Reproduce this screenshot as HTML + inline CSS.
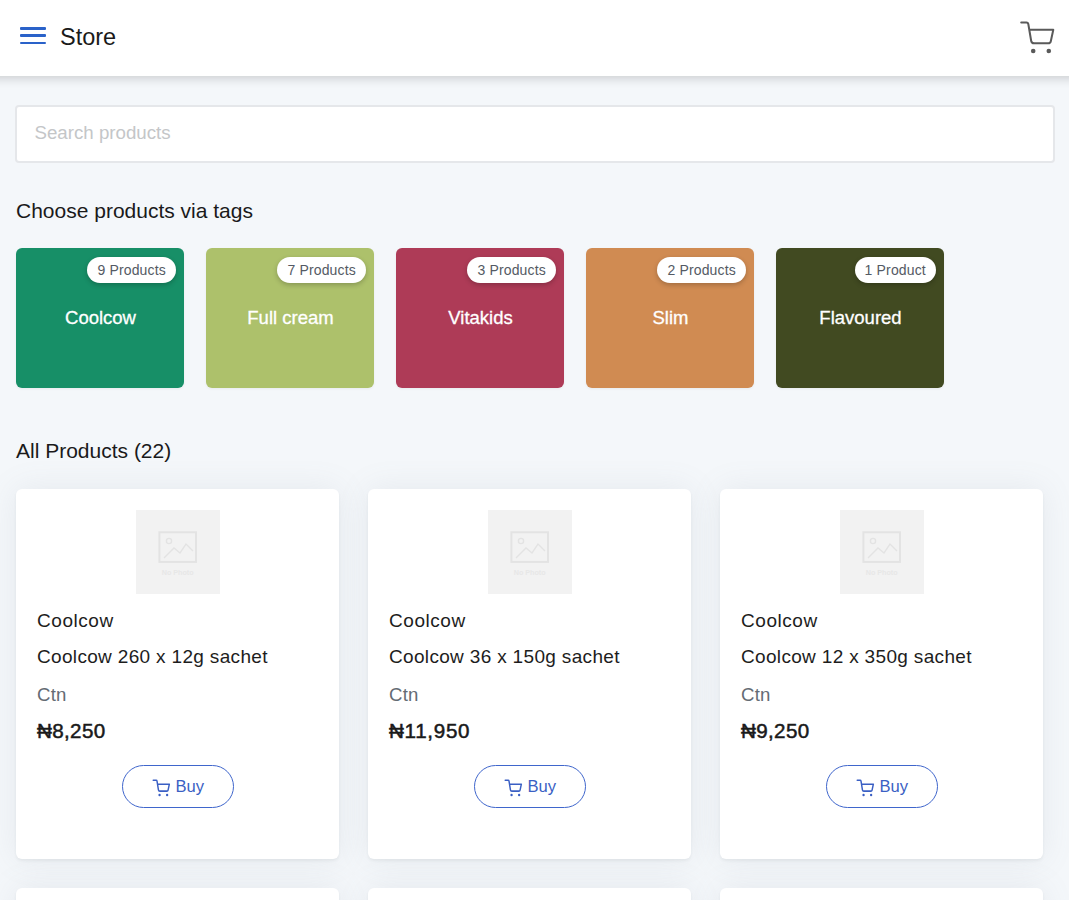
<!DOCTYPE html>
<html lang="en">
<head>
<meta charset="utf-8">
<title>Store</title>
<style>
*{box-sizing:border-box;margin:0;padding:0}
html,body{width:1069px;height:900px;overflow:hidden}
body{background:#f4f7fa;font-family:"Liberation Sans",sans-serif;color:#1d1d1d;position:relative}
.abs{position:absolute}
header{position:absolute;left:0;top:0;width:1069px;height:76px;background:#fff;z-index:5}
header::after{content:'';position:absolute;left:-30px;right:-30px;top:0;bottom:0;box-shadow:0 2px 10px rgba(10,12,15,.19);pointer-events:none}
.burger{position:absolute;left:20px;top:27px;width:26px;height:18px}
.burger i{position:absolute;left:0;width:26px;height:2.6px;background:#2a62c9;border-radius:1px}
.title{position:absolute;left:60px;top:22px;font-size:23.5px;line-height:30px;color:#1a1a1a;white-space:nowrap}
.cart{position:absolute;left:1018px;top:18px;width:40px;height:40px}
.search{position:absolute;left:15px;top:105px;width:1040px;height:58px;background:#fff;border:2px solid #e5e7ea;border-radius:4px}
.search span{position:absolute;left:17.5px;top:14.5px;font-size:18.7px;line-height:22px;color:#c4c6c8;white-space:nowrap}
h2{position:absolute;left:16px;font-weight:400;font-size:21px;line-height:26px;color:#1a1a1a;white-space:nowrap}
.tag{position:absolute;top:248.3px;width:168.4px;height:140.2px;border-radius:6px;color:#fff;box-shadow:0 1px 3px rgba(0,0,0,.05)}
.tag b{position:absolute;right:8.5px;top:9px;height:26px;padding:0 10px;border-radius:13px;background:#fff;color:#545a64;font-weight:400;font-size:14px;letter-spacing:.15px;line-height:26px;white-space:nowrap;box-shadow:0 2px 5px rgba(0,0,0,.22)}
.tag span{position:absolute;left:0;width:169px;top:57.6px;text-align:center;font-size:18.5px;line-height:24px;white-space:nowrap;-webkit-text-stroke:.3px #fff}
.card{position:absolute;width:323.4px;height:370.6px;background:#fff;border-radius:6px;box-shadow:0 2px 3px rgba(40,45,50,.06),0 0 32px rgba(120,132,148,.12)}
.ph{position:absolute;left:120px;top:21.4px;width:84px;height:84px;background:#f2f2f2}
.ph svg{position:absolute;left:0;top:0}
.l1,.l2,.l3,.l4{position:absolute;left:21px;white-space:nowrap;line-height:24px}
.l1{top:120px;font-size:19px;letter-spacing:.55px;color:#1d1d1d}
.l2{top:156.3px;font-size:19px;letter-spacing:.33px;color:#1d1d1d}
.l3{top:194.5px;font-size:18.6px;letter-spacing:.2px;color:#646b74}
.l4{top:230.3px;font-size:20.6px;font-weight:400;letter-spacing:.35px;color:#1a1a1a;-webkit-text-stroke:.5px #1a1a1a}
.buy{position:absolute;left:105.7px;top:276.4px;width:112.4px;height:43.4px;border:1.3px solid #3f66cc;border-radius:22px;background:#fff;color:#3a5fc4;font-size:16.6px;line-height:41.8px}
.buy svg{position:absolute;left:29px;top:11.7px}
.buy span{position:absolute;left:52.8px;top:0;white-space:nowrap}
</style>
</head>
<body>
<header>
  <div class="burger"><i style="top:0"></i><i style="top:7.4px"></i><i style="top:14.8px"></i></div>
  <div class="title">Store</div>
  <svg class="cart" viewBox="0 0 40 40" fill="none" stroke="#5a5a5a" stroke-width="2" stroke-linecap="round" stroke-linejoin="round">
    <path d="M3.2 4.500 H8.5 Q10 4.500 10.300 6 L13.200 23 Q13.600 25.300 16 25.300 H30.300 Q32.400 25.300 32.800 23.300 L35.300 11.800 H11.600"/>
    <circle cx="15.200" cy="33" r="2.300" fill="#5a5a5a" stroke="none"/>
    <circle cx="30.800" cy="33" r="2.300" fill="#5a5a5a" stroke="none"/>
  </svg>
</header>

<div class="search"><span>Search products</span></div>

<h2 style="top:198px">Choose products via tags</h2>

<div class="tag" style="left:16px;background:#178f67"><b>9 Products</b><span>Coolcow</span></div>
<div class="tag" style="left:206px;background:#adc16b"><b>7 Products</b><span>Full cream</span></div>
<div class="tag" style="left:396px;background:#ae3b57"><b>3 Products</b><span>Vitakids</span></div>
<div class="tag" style="left:586px;background:#d08b52"><b>2 Products</b><span>Slim</span></div>
<div class="tag" style="left:776px;background:#414a21"><b>1 Product</b><span>Flavoured</span></div>

<h2 style="top:438px">All Products (22)</h2>

<div class="card" style="left:16px;top:488.7px">
  <div class="ph"><svg width="84" height="84" viewBox="0 0 84 84" fill="none" stroke="#e3e3e3" stroke-width="1.4"><rect x="23.4" y="22.300" width="36.6" height="29.600" stroke-width="2"/><circle cx="33" cy="31" r="2.6"/><path d="M28 48 L38 38 L44 43 L50 34 L57 41"/><text x="41.700" y="65.200" text-anchor="middle" font-family="Liberation Sans, sans-serif" font-size="7.2" font-weight="700" fill="#e7e7e7" stroke="none">No Photo</text></svg></div>
  <div class="l1">Coolcow</div>
  <div class="l2">Coolcow 260 x 12g sachet</div>
  <div class="l3">Ctn</div>
  <div class="l4">₦8,250</div>
  <div class="buy"><svg width="19.5" height="20.6" preserveAspectRatio="none" viewBox="0 0 40 40" fill="none" stroke="#3a5fc4" stroke-width="3" stroke-linecap="round" stroke-linejoin="round"><path d="M2.5 4.500 H8.5 Q10 4.5 10.3 6 L13.2 23 Q13.6 25.5 16 25.5 H30.5 Q32.6 25.5 33 23.5 L35.6 12 H11.6"/><circle cx="15.5" cy="33" r="2.4" fill="#3a5fc4" stroke="none"/><circle cx="31" cy="33" r="2.4" fill="#3a5fc4" stroke="none"/></svg><span>Buy</span></div>
</div>

<div class="card" style="left:368px;top:488.7px">
  <div class="ph"><svg width="84" height="84" viewBox="0 0 84 84" fill="none" stroke="#e3e3e3" stroke-width="1.4"><rect x="23.4" y="22.300" width="36.6" height="29.600" stroke-width="2"/><circle cx="33" cy="31" r="2.6"/><path d="M28 48 L38 38 L44 43 L50 34 L57 41"/><text x="41.700" y="65.200" text-anchor="middle" font-family="Liberation Sans, sans-serif" font-size="7.2" font-weight="700" fill="#e7e7e7" stroke="none">No Photo</text></svg></div>
  <div class="l1">Coolcow</div>
  <div class="l2">Coolcow 36 x 150g sachet</div>
  <div class="l3">Ctn</div>
  <div class="l4" style="letter-spacing:.7px">₦11,950</div>
  <div class="buy"><svg width="19.5" height="20.6" preserveAspectRatio="none" viewBox="0 0 40 40" fill="none" stroke="#3a5fc4" stroke-width="3" stroke-linecap="round" stroke-linejoin="round"><path d="M2.5 4.500 H8.5 Q10 4.5 10.3 6 L13.2 23 Q13.6 25.5 16 25.5 H30.5 Q32.6 25.5 33 23.5 L35.6 12 H11.6"/><circle cx="15.5" cy="33" r="2.4" fill="#3a5fc4" stroke="none"/><circle cx="31" cy="33" r="2.4" fill="#3a5fc4" stroke="none"/></svg><span>Buy</span></div>
</div>

<div class="card" style="left:720px;top:488.7px">
  <div class="ph"><svg width="84" height="84" viewBox="0 0 84 84" fill="none" stroke="#e3e3e3" stroke-width="1.4"><rect x="23.4" y="22.300" width="36.6" height="29.600" stroke-width="2"/><circle cx="33" cy="31" r="2.6"/><path d="M28 48 L38 38 L44 43 L50 34 L57 41"/><text x="41.700" y="65.200" text-anchor="middle" font-family="Liberation Sans, sans-serif" font-size="7.2" font-weight="700" fill="#e7e7e7" stroke="none">No Photo</text></svg></div>
  <div class="l1">Coolcow</div>
  <div class="l2">Coolcow 12 x 350g sachet</div>
  <div class="l3">Ctn</div>
  <div class="l4">₦9,250</div>
  <div class="buy"><svg width="19.5" height="20.6" preserveAspectRatio="none" viewBox="0 0 40 40" fill="none" stroke="#3a5fc4" stroke-width="3" stroke-linecap="round" stroke-linejoin="round"><path d="M2.5 4.500 H8.5 Q10 4.5 10.3 6 L13.2 23 Q13.6 25.5 16 25.5 H30.5 Q32.6 25.5 33 23.5 L35.6 12 H11.6"/><circle cx="15.5" cy="33" r="2.4" fill="#3a5fc4" stroke="none"/><circle cx="31" cy="33" r="2.4" fill="#3a5fc4" stroke="none"/></svg><span>Buy</span></div>
</div>

<div class="card" style="left:16px;top:888px"></div>
<div class="card" style="left:368px;top:888px"></div>
<div class="card" style="left:720px;top:888px"></div>
</body>
</html>
